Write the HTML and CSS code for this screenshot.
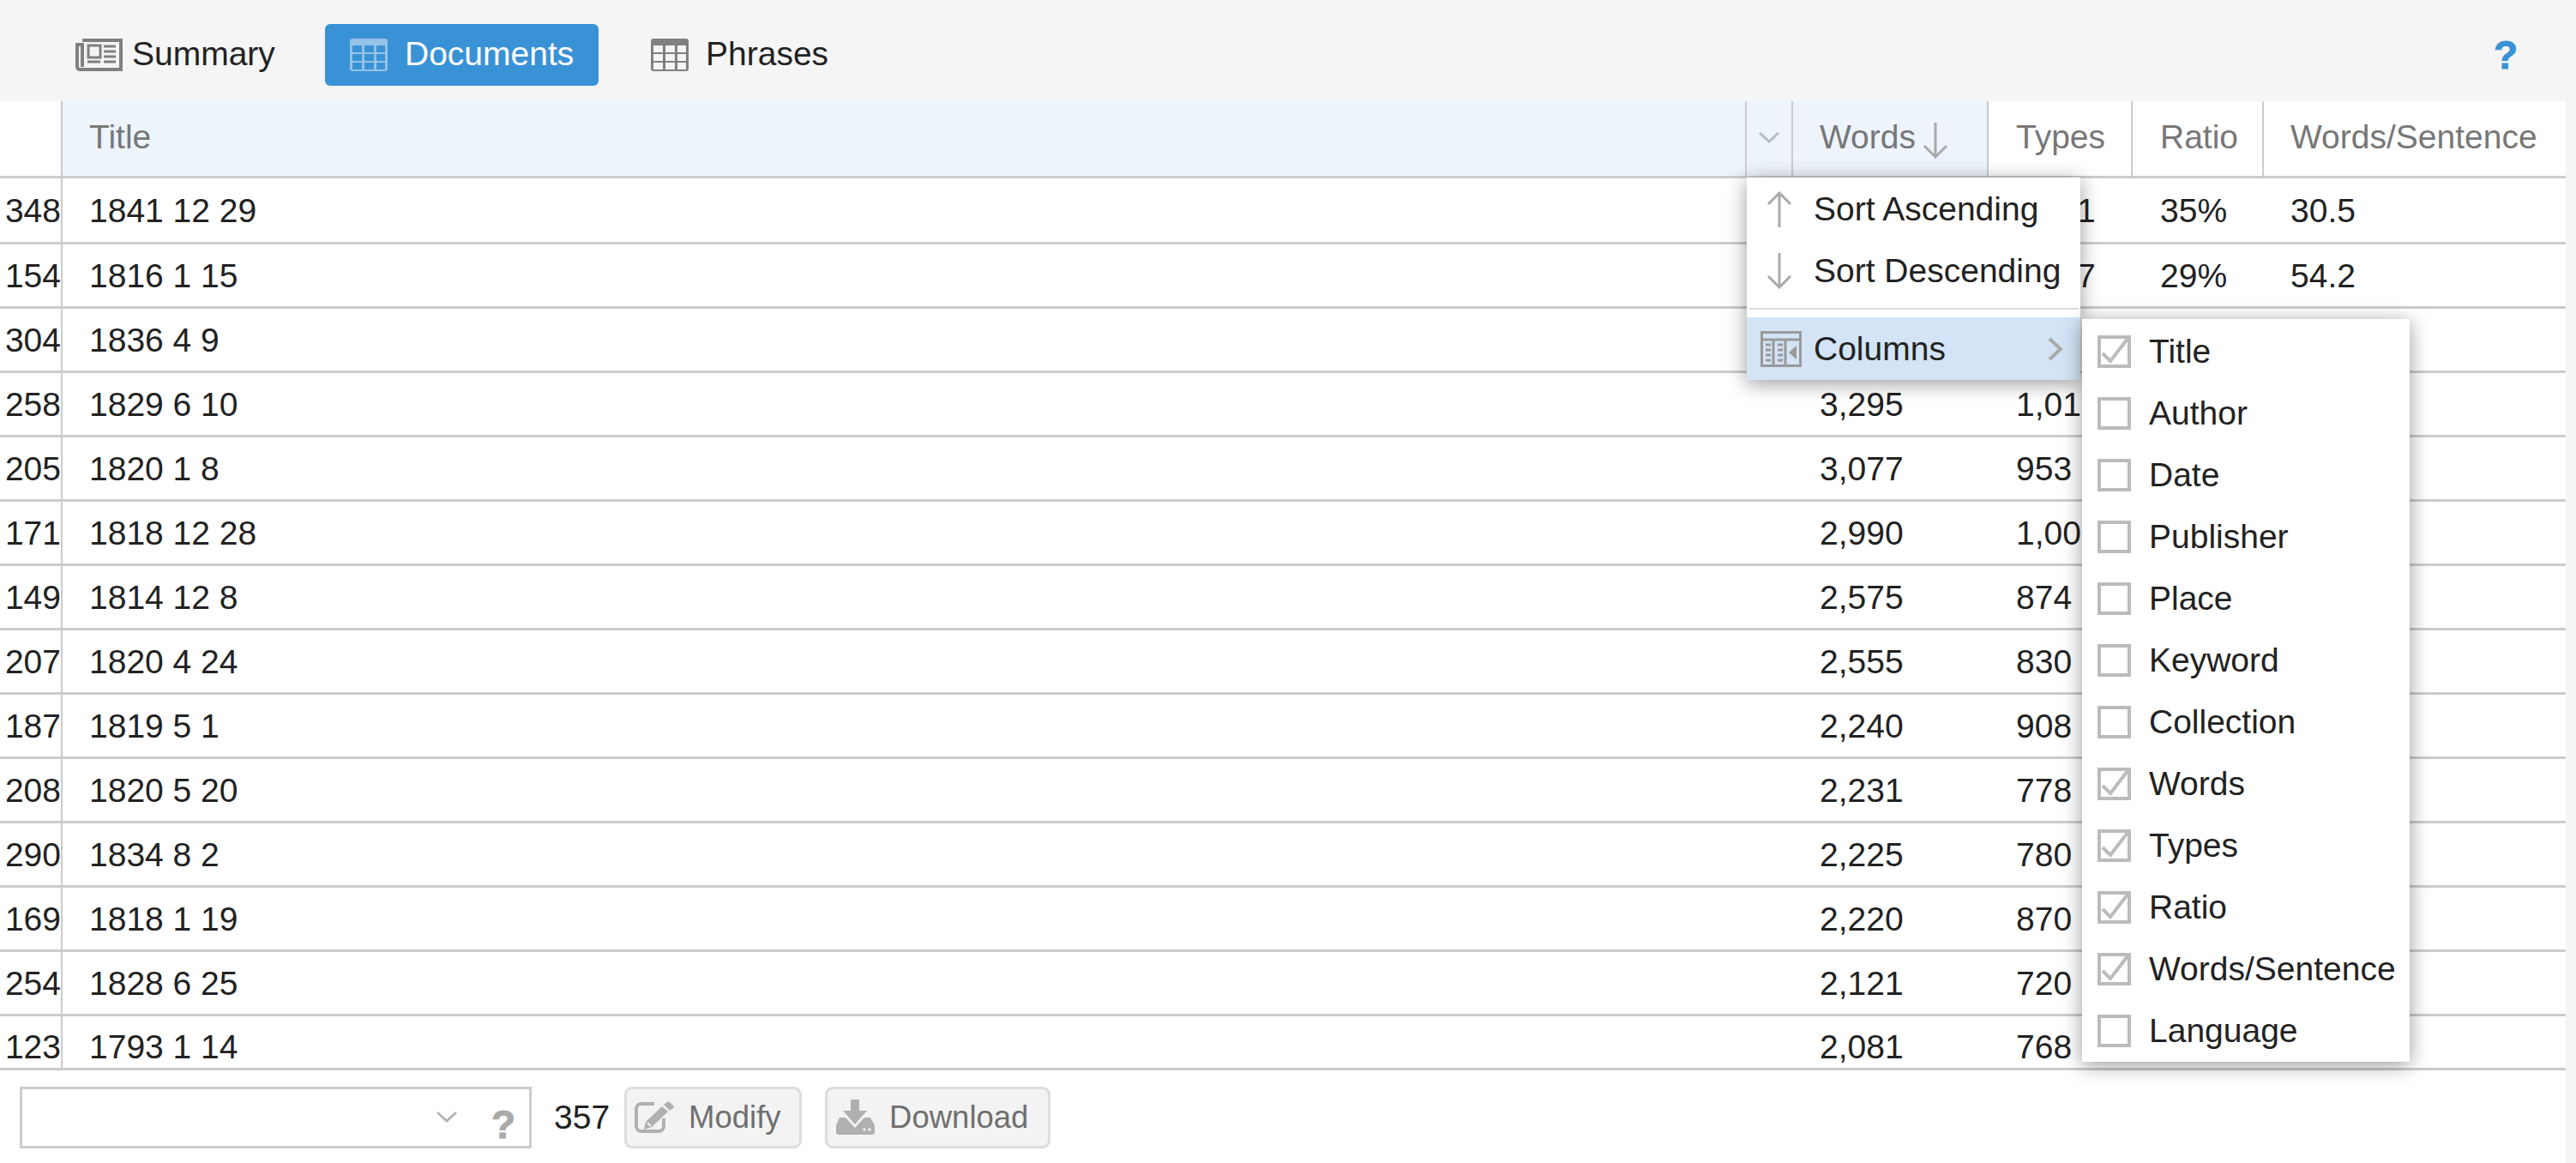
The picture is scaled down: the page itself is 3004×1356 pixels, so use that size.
FILE: index.html
```html
<!DOCTYPE html>
<html lang="en">
<head>
<meta charset="utf-8">
<title>Documents</title>
<link rel="stylesheet" href="styles.css">
</head>
<body>
<div class="app">
  <header class="toolbar">
    <nav class="tabs">
      <a class="tab tab-summary">
        <svg class="tab-icon news" viewBox="0 0 55 38"><path d="M8 2h45v34H5a3 3 0 0 1-3-3V7h6" fill="none" stroke="#808080" stroke-width="4"/><path d="M8 5v28" stroke="#808080" stroke-width="4"/><rect x="15" y="8" width="14" height="14" fill="none" stroke="#808080" stroke-width="3"/><path d="M33 9h14M33 15h14M33 21h14M14 27h15M33 27h14" stroke="#808080" stroke-width="3"/></svg>
        <span>Summary</span>
      </a>
      <a class="tab tab-active">
        <svg class="tab-icon grid" viewBox="0 0 44 38"><rect width="44" height="38" rx="3" fill="#94c2e8"/><g fill="#3a92d6"><rect x="3" y="8" width="11" height="8"/><rect x="17" y="8" width="11" height="8"/><rect x="31" y="8" width="10" height="8"/><rect x="3" y="18" width="11" height="8"/><rect x="17" y="18" width="11" height="8"/><rect x="31" y="18" width="10" height="8"/><rect x="3" y="28" width="11" height="8"/><rect x="17" y="28" width="11" height="8"/><rect x="31" y="28" width="10" height="8"/></g></svg>
        <span>Documents</span>
      </a>
      <a class="tab tab-phrases">
        <svg class="tab-icon grid" viewBox="0 0 44 38"><rect width="44" height="38" rx="3" fill="#808080"/><g fill="#f5f5f5"><rect x="3" y="8" width="11" height="8"/><rect x="17" y="8" width="11" height="8"/><rect x="31" y="8" width="10" height="8"/><rect x="3" y="18" width="11" height="8"/><rect x="17" y="18" width="11" height="8"/><rect x="31" y="18" width="10" height="8"/><rect x="3" y="28" width="11" height="8"/><rect x="17" y="28" width="11" height="8"/><rect x="31" y="28" width="10" height="8"/></g></svg>
        <span>Phrases</span>
      </a>
    </nav>
    <span class="help">?</span>
  </header>

  <main class="table-wrap">
    <div class="row head">
      <div class="c-num"></div>
      <div class="c-title sorted">Title</div>
      <div class="c-trigger sorted"><svg viewBox="0 0 26 14" class="chev-down"><path d="M2 2l11 10L24 2" fill="none" stroke="#b5bcc4" stroke-width="3"/></svg></div>
      <div class="c-words sorted"><span>Words</span><svg class="sort-arrow" viewBox="0 0 30 42"><path d="M15 0v40M2 27l13 13 13-13" fill="none" stroke="#aaa" stroke-width="3"/></svg></div>
      <div class="c-types">Types</div>
      <div class="c-ratio">Ratio</div>
      <div class="c-wps">Words/Sentence</div>
    </div>
    <div class="row first"><div class="c-num">348</div><div class="c-title">1841 12 29</div><div class="c-trigger"></div><div class="c-words"></div><div class="c-types tail">1</div><div class="c-ratio">35%</div><div class="c-wps">30.5</div></div>
    <div class="row"><div class="c-num">154</div><div class="c-title">1816 1 15</div><div class="c-trigger"></div><div class="c-words"></div><div class="c-types tail">7</div><div class="c-ratio">29%</div><div class="c-wps">54.2</div></div>
    <div class="row"><div class="c-num">304</div><div class="c-title">1836 4 9</div></div>
    <div class="row"><div class="c-num">258</div><div class="c-title">1829 6 10</div><div class="c-trigger"></div><div class="c-words">3,295</div><div class="c-types">1,01</div></div>
    <div class="row"><div class="c-num">205</div><div class="c-title">1820 1 8</div><div class="c-trigger"></div><div class="c-words">3,077</div><div class="c-types">953</div></div>
    <div class="row"><div class="c-num">171</div><div class="c-title">1818 12 28</div><div class="c-trigger"></div><div class="c-words">2,990</div><div class="c-types">1,00</div></div>
    <div class="row"><div class="c-num">149</div><div class="c-title">1814 12 8</div><div class="c-trigger"></div><div class="c-words">2,575</div><div class="c-types">874</div></div>
    <div class="row"><div class="c-num">207</div><div class="c-title">1820 4 24</div><div class="c-trigger"></div><div class="c-words">2,555</div><div class="c-types">830</div></div>
    <div class="row"><div class="c-num">187</div><div class="c-title">1819 5 1</div><div class="c-trigger"></div><div class="c-words">2,240</div><div class="c-types">908</div></div>
    <div class="row"><div class="c-num">208</div><div class="c-title">1820 5 20</div><div class="c-trigger"></div><div class="c-words">2,231</div><div class="c-types">778</div></div>
    <div class="row"><div class="c-num">290</div><div class="c-title">1834 8 2</div><div class="c-trigger"></div><div class="c-words">2,225</div><div class="c-types">780</div></div>
    <div class="row"><div class="c-num">169</div><div class="c-title">1818 1 19</div><div class="c-trigger"></div><div class="c-words">2,220</div><div class="c-types">870</div></div>
    <div class="row"><div class="c-num">254</div><div class="c-title">1828 6 25</div><div class="c-trigger"></div><div class="c-words">2,121</div><div class="c-types">720</div></div>
    <div class="row last"><div class="c-num">123</div><div class="c-title">1793 1 14</div><div class="c-trigger"></div><div class="c-words">2,081</div><div class="c-types">768</div></div>

    <div class="menu">
      <div class="menu-item">
        <svg class="menu-icon" viewBox="0 0 30 42"><path d="M15 42V2M2 15L15 2l13 13" fill="none" stroke="#aaa" stroke-width="3"/></svg>
        <span>Sort Ascending</span>
      </div>
      <div class="menu-item">
        <svg class="menu-icon" viewBox="0 0 30 42"><path d="M15 0v40M2 27l13 13 13-13" fill="none" stroke="#aaa" stroke-width="3"/></svg>
        <span>Sort Descending</span>
      </div>
      <div class="menu-sep"></div>
      <div class="menu-item menu-active">
        <svg class="menu-icon columns" viewBox="0 0 48 42"><rect x="1.5" y="1.5" width="45" height="39" fill="none" stroke="#999" stroke-width="3"/><path d="M1 10h46M15 10v30M29 10v30" stroke="#999" stroke-width="3"/><path d="M6 16h6M6 22h6M6 28h6M6 34h6M20 16h6M20 22h6M20 28h6M20 34h6" stroke="#999" stroke-width="3"/><path d="M42 17v16l-9-8z" fill="#999"/></svg>
        <span>Columns</span>
        <svg class="chev-right" viewBox="0 0 18 28"><path d="M2 2l13 12L2 26" fill="none" stroke="#aaa" stroke-width="4"/></svg>
      </div>
    </div>

    <div class="submenu">
      <label class="check-item"><i class="box"><svg class="tick" viewBox="0 0 39 38"><path d="M6 21l9 9L35 4" fill="none" stroke="#bbb" stroke-width="4"/></svg></i><span>Title</span></label>
      <label class="check-item"><i class="box"></i><span>Author</span></label>
      <label class="check-item"><i class="box"></i><span>Date</span></label>
      <label class="check-item"><i class="box"></i><span>Publisher</span></label>
      <label class="check-item"><i class="box"></i><span>Place</span></label>
      <label class="check-item"><i class="box"></i><span>Keyword</span></label>
      <label class="check-item"><i class="box"></i><span>Collection</span></label>
      <label class="check-item"><i class="box"><svg class="tick" viewBox="0 0 39 38"><path d="M6 21l9 9L35 4" fill="none" stroke="#bbb" stroke-width="4"/></svg></i><span>Words</span></label>
      <label class="check-item"><i class="box"><svg class="tick" viewBox="0 0 39 38"><path d="M6 21l9 9L35 4" fill="none" stroke="#bbb" stroke-width="4"/></svg></i><span>Types</span></label>
      <label class="check-item"><i class="box"><svg class="tick" viewBox="0 0 39 38"><path d="M6 21l9 9L35 4" fill="none" stroke="#bbb" stroke-width="4"/></svg></i><span>Ratio</span></label>
      <label class="check-item"><i class="box"><svg class="tick" viewBox="0 0 39 38"><path d="M6 21l9 9L35 4" fill="none" stroke="#bbb" stroke-width="4"/></svg></i><span>Words/Sentence</span></label>
      <label class="check-item"><i class="box"></i><span>Language</span></label>
    </div>
  </main>

  <footer class="footer">
    <div class="search">
      <svg class="search-chev" viewBox="0 0 26 14"><path d="M2 2l11 10L24 2" fill="none" stroke="#b5b5b5" stroke-width="3"/></svg>
      <span class="search-help">?</span>
    </div>
    <span class="count">357</span>
    <button class="btn btn-modify">
      <svg class="btn-icon" viewBox="0 0 47 38"><path d="M24 3H9a6 6 0 0 0-6 6v20a6 6 0 0 0 6 6h20a6 6 0 0 0 6-6v-9" fill="none" stroke="#b0b0b0" stroke-width="4"/><path d="M33 6l7 6-19 18-9 3 2-9z" fill="#b0b0b0"/><path d="M35 4l4-3a2 2 0 0 1 3 0l4 4a2 2 0 0 1 0 3l-4 3z" fill="#b0b0b0"/><path d="M16 25l4 4" stroke="#f3f3f3" stroke-width="2"/></svg>
      <span>Modify</span>
    </button>
    <button class="btn btn-download">
      <svg class="btn-icon dl" viewBox="0 0 45 41"><path d="M17 0h10v13h9L22 29 8 13h9z" fill="#b0b0b0"/><path d="M4 21h7l11 12 11-12h7l5 9v8a3 3 0 0 1-3 3H3a3 3 0 0 1-3-3v-8z" fill="#b0b0b0"/><circle cx="33" cy="35" r="1.7" fill="#f3f3f3"/><circle cx="39" cy="35" r="1.7" fill="#f3f3f3"/></svg>
      <span>Download</span>
    </button>
  </footer>
</div>
</body>
</html>
```
FILE: styles.css
```css
* { box-sizing: border-box; }
html, body { margin: 0; height: 100%; }
body {
  background: #f5f5f5;
  font-family: "Liberation Sans", Arial, sans-serif;
  font-size: 39px;
  line-height: 72px;
  color: #222;
}
.app { width: 3004px; height: 1356px; display: flex; flex-direction: column; overflow: hidden; }

.toolbar { height: 118px; display: flex; align-items: flex-start; justify-content: space-between; padding: 28px 68px 0 0; flex: none; }
.tabs { display: flex; }
.tab { height: 72px; display: flex; align-items: center; gap: 11px; }
.tab > span { margin-top: -3px; }
.tab-summary { margin-left: 88px; width: 291px; }
.tab-active { width: 319px; padding-left: 29px; gap: 20px; background: #3a92d6; color: #fff; border-radius: 6px; }
.tab-phrases { margin-left: 61px; gap: 20px; }
.tab-icon { height: 38px; flex: none; }
.tab-icon.news { width: 55px; }
.tab-icon.grid { width: 44px; }
.help { font-weight: 700; font-size: 46px; color: #3a92d6; -webkit-text-stroke: 1px #3a92d6; }

.table-wrap { position: relative; width: 2992px; flex: none; background: #fff; height: 1131px; }
.row { display: flex; height: 75px; border-bottom: 3px solid #ccc; overflow: hidden; }
.row.head { height: 90px; color: #777; }
.row.first { height: 77px; }
.row.last { height: 63px; }
.row > div { height: 100%; display: flex; align-items: center; padding-top: 2px; }
.row.head > div { padding-top: 0; padding-bottom: 4px; }
.row.last > div { align-items: flex-start; padding-top: 0; }
.c-num { width: 73px; justify-content: flex-end; border-right: 2px solid #ccc; flex: none; }
.c-title { width: 1964px; padding-left: 31px; flex: none; }
.c-trigger { width: 54px; flex: none; justify-content: center; }
.c-words { width: 228px; padding-left: 31px; flex: none; gap: 8px; }
.c-types { width: 168px; padding-left: 32px; flex: none; }
.c-types.tail { padding-left: 103px; }
.c-ratio { width: 153px; padding-left: 32px; flex: none; }
.c-wps { flex: 1; padding-left: 31px; }
.head .sorted { background: #edf4fc; }
.head .c-title, .head .c-trigger, .head .c-words, .head .c-types, .head .c-ratio { border-right: 2px solid #ccc; }
.chev-down { width: 26px; height: 14px; }
.sort-arrow { width: 30px; height: 42px; margin-top: 8px; }

.menu { position: absolute; left: 2037px; top: 89px; width: 389px; height: 236px; background: #fff; box-shadow: 0 4px 22px rgba(0,0,0,.4); z-index: 2; padding-top: 1px; }
.menu-item { height: 72px; display: flex; align-items: center; position: relative; padding-left: 78px; }
.menu-icon { position: absolute; left: 23px; width: 30px; height: 42px; }
.menu-icon.columns { left: 16px; width: 48px; }
.menu-sep { height: 2px; background: #ddd; margin: 7px 2px 9px 3px; }
.menu-active { height: 73px; background: #d2e4f5; }
.chev-right { position: absolute; left: 351px; width: 18px; height: 28px; }

.submenu { position: absolute; left: 2428px; top: 254px; width: 382px; height: 866px; padding-top: 2px; background: #fff; box-shadow: 0 4px 22px rgba(0,0,0,.4); z-index: 3; }
.check-item { height: 72px; display: flex; align-items: center; gap: 21px; padding-left: 18px; }
.box { width: 39px; height: 38px; border: 4px solid #bbb; position: relative; flex: none; }
.tick { position: absolute; left: -4px; top: -4px; width: 39px; height: 38px; }

.footer { flex: 1; width: 2992px; background: #fff; display: flex; align-items: flex-start; padding: 18px 0 0 23px; }
.search { width: 597px; height: 72px; border: 3px solid #ccc; position: relative; flex: none; }
.search-chev { position: absolute; left: 482px; top: 25px; width: 26px; height: 14px; }
.search-help { position: absolute; left: 547px; top: 18px; font-weight: 700; font-size: 46px; line-height: 46px; color: #aaa; -webkit-text-stroke: 1px #aaa; }
.count { margin-left: 26px; }
.btn { font: inherit; font-size: 36.5px; color: #6f6f6f; height: 72px; background: #f3f3f3; border: 3px solid #ddd; border-radius: 9px; display: flex; align-items: center; padding: 0 0 0 8px; flex: none; }
.btn-modify { width: 207px; margin-left: 17px; gap: 17px; }
.btn-download { width: 263px; margin-left: 27px; gap: 17px; padding-left: 10px; }
.btn-icon { width: 47px; height: 38px; flex: none; }
.btn-icon.dl { width: 45px; height: 41px; margin-top: -2px; }
```
